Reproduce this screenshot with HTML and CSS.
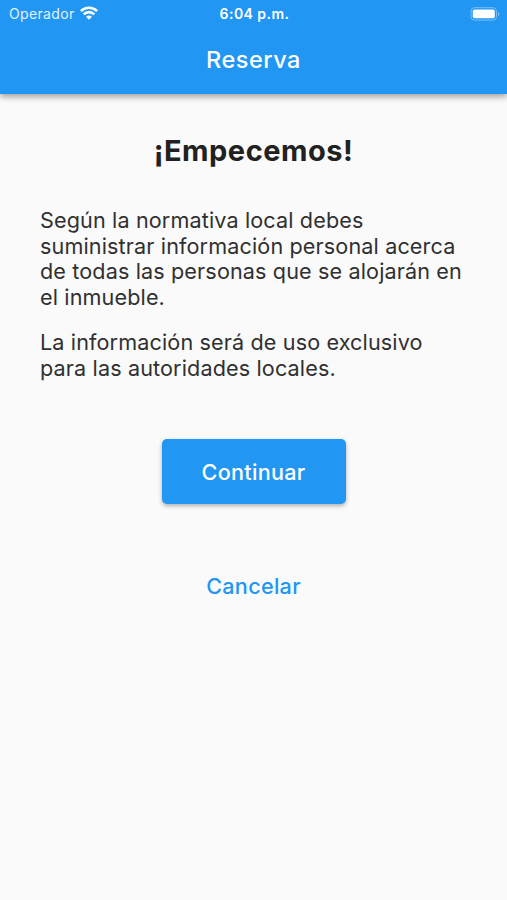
FILE: index.html
```html
<!DOCTYPE html>
<html lang="es">
  <head>
    <meta charset="UTF-8" />
    <meta name="viewport" content="width=device-width, initial-scale=1" />
    <title>Reserva</title>
    <link rel="stylesheet" href="styles.css">
  </head>
  <body>
    <header class="app-bar">
      <div class="status-bar">
        <div class="carrier">
          <span>Operador</span>
          <svg class="wifi" viewBox="0 0 18 14" width="18" height="14">
            <g fill="none" stroke="#fff" stroke-width="2.6">
              <path d="M0.9 5.1a11.5 11.5 0 0 1 16.2 0" />
              <path d="M3.7 8.3a7.5 7.5 0 0 1 10.6 0" />
            </g>
            <path d="M9 13.8L6.1 10.8a4 4 0 0 1 5.8 0z" fill="#fff" />
          </svg>
        </div>
        <span class="time">6:04 p.m.</span>
        <svg class="battery" viewBox="0 0 30 14" width="30" height="14">
          <rect x="1" y="0.7" width="25.5" height="12.4" rx="3.5" fill="none" stroke="#fff" stroke-opacity="0.4" />
          <rect x="2.8" y="2.5" width="22" height="8.8" rx="1.8" fill="#fff" />
          <path d="M28 4.9a2.2 2.2 0 0 1 0 4z" fill="#fff" fill-opacity="0.45" />
        </svg>
      </div>
      <div class="title">Reserva</div>
    </header>

    <main class="content">
      <h1>¡Empecemos!</h1>
      <p>
        Según la normativa local debes<br />
        suministrar información personal acerca<br />
        de todas las personas que se alojarán en<br />
        el inmueble.
      </p>
      <p class="last">
        La información será de uso exclusivo<br />
        para las autoridades locales.
      </p>
      <button class="continue">Continuar</button>
      <button class="cancel">Cancelar</button>
    </main>
  </body>
</html>
```

FILE: styles.css
```css
body {
  margin: 0;
  min-height: 900px;
  font-family: "Inter", sans-serif;
  background: #fafafa;
  color: #212121;
}

.app-bar {
  height: 94px;
  background: #2196f3;
  color: #fff;
  box-shadow: 0 3px 6px rgba(0, 0, 0, 0.35);
}

.status-bar {
  display: grid;
  grid-template-columns: 1fr auto 1fr;
  align-items: center;
  height: 27px;
  padding: 0 7px 0 9px;
  font-size: 14px;
  letter-spacing: 0.35px;
}

.carrier {
  display: flex;
  align-items: center;
  gap: 5px;
  color: #e3f2fd;
}

.wifi {
  position: relative;
  top: -1px;
}

.time {
  font-weight: 600;
  letter-spacing: 0.45px;
}

.battery {
  justify-self: end;
}

.title {
  line-height: 65px;
  text-align: center;
  font-size: 23.5px;
  font-weight: 450;
  letter-spacing: 0.5px;
}

.content {
  display: flex;
  flex-direction: column;
  padding: 39px 40px 0;
}

h1 {
  margin: 0 0 39px;
  text-align: center;
  font-size: 29px;
  line-height: 36px;
  font-weight: 700;
  letter-spacing: 0.5px;
}

p {
  margin: 0 0 19px;
  font-size: 21.6px;
  line-height: 25.7px;
  letter-spacing: 0.13px;
  white-space: nowrap;
  color: #303030;
}

.last {
  margin-bottom: 58px;
}

button {
  align-self: center;
  border: none;
  font-family: inherit;
  font-size: 21.6px;
  font-weight: 500;
  letter-spacing: 0.3px;
  cursor: pointer;
}

.continue {
  width: 184px;
  height: 65px;
  border-radius: 5px;
  background: #2196f3;
  color: #fff;
  box-shadow: 0 2px 4px rgba(0, 0, 0, 0.3);
}

.cancel {
  height: 65px;
  margin-top: 49px;
  background: none;
  color: #2196f3;
}
```
